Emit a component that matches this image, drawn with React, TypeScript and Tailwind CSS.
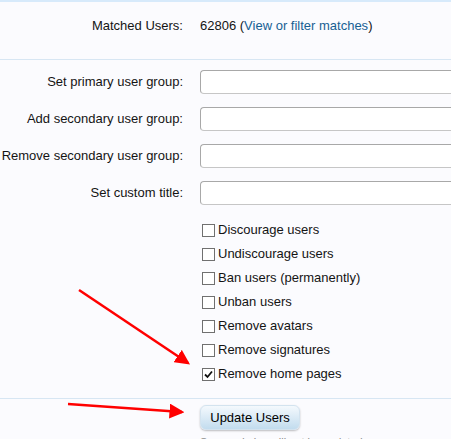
const fields = [
  "Set primary user group:",
  "Add secondary user group:",
  "Remove secondary user group:",
  "Set custom title:",
];

const actions = [
  { label: "Discourage users", checked: false },
  { label: "Undiscourage users", checked: false },
  { label: "Ban users (permanently)", checked: false },
  { label: "Unban users", checked: false },
  { label: "Remove avatars", checked: false },
  { label: "Remove signatures", checked: false },
  { label: "Remove home pages", checked: true },
];

function Check({ checked }: { checked: boolean }) {
  return (
    <span className="w-[13px] h-[13px] border border-[#707070] bg-white flex items-center justify-center shrink-0">
      {checked && (
        <svg width="9" height="9" viewBox="0 0 9 9">
          <path d="M1 4.5 L3.5 7 L8 1.5" fill="none" stroke="#111" strokeWidth="1.8" />
        </svg>
      )}
    </span>
  );
}

export default function App() {
  return (
    <div
      className="relative w-[451px] h-[439px] overflow-hidden bg-[#fbfbfe] border-t-2 border-[#d7eafb] text-[13px] text-[#141414]"
      style={{ fontFamily: '"Liberation Sans", Arial, sans-serif' }}
    >
      <div className="flex items-center h-[57px] pb-[9px]">
        <div className="w-[185px] text-right pr-[2px]">Matched Users:</div>
        <div className="pl-[15px]">
          62806 (<span className="text-[#176093]">View or filter matches</span>)
        </div>
      </div>
      <div className="border-t border-[#d7e6f3]" />
      <div className="flex flex-col gap-[13px] pt-[10px]">
        {fields.map((f) => (
          <div key={f} className="flex items-center h-[24px]">
            <div className="w-[185px] text-right pr-[2px] whitespace-nowrap">{f}</div>
            <div className="ml-[15px] flex-1 h-[24px] bg-white border border-[#c6c6c6] border-t-[#a8a8a8] border-l-[#a8a8a8] rounded-l-[4px] border-r-0" />
          </div>
        ))}
      </div>
      <div className="flex flex-col pl-[202px] pt-[13px]">
        {actions.map((a) => (
          <div key={a.label} className="flex items-center gap-[3px] h-[24px]">
            <Check checked={a.checked} />
            <span>{a.label}</span>
          </div>
        ))}
      </div>
      <div className="border-t border-[#d7e6f3] mt-[12px]" />
      <div className="pl-[200px] pt-[6px]">
        <div className="w-[100px] h-[25px] rounded-[6px] bg-gradient-to-b from-[#f4f9fd] to-[#c2dcee] border border-[#d3e3ef] shadow-[0_1px_2px_rgba(0,0,0,0.25)] flex items-center justify-center text-[13px] text-black">
          Update Users
        </div>
        <div className="text-[11px] text-[#8a8a8a] mt-[4px]">Super admins will not be updated</div>
      </div>
      <svg className="absolute left-0 top-0 pointer-events-none" width="451" height="439">
        <defs>
          <marker id="ah" markerWidth="6" markerHeight="6" refX="5" refY="3" orient="auto" markerUnits="strokeWidth">
            <path d="M0 0 L6 3 L0 6 Z" fill="#ff0000" />
          </marker>
        </defs>
        <line x1="79" y1="288" x2="188" y2="361" stroke="#ff0000" strokeWidth="2.5" markerEnd="url(#ah)" />
        <line x1="68" y1="402" x2="182" y2="410" stroke="#ff0000" strokeWidth="2.5" markerEnd="url(#ah)" />
      </svg>
    </div>
  );
}
